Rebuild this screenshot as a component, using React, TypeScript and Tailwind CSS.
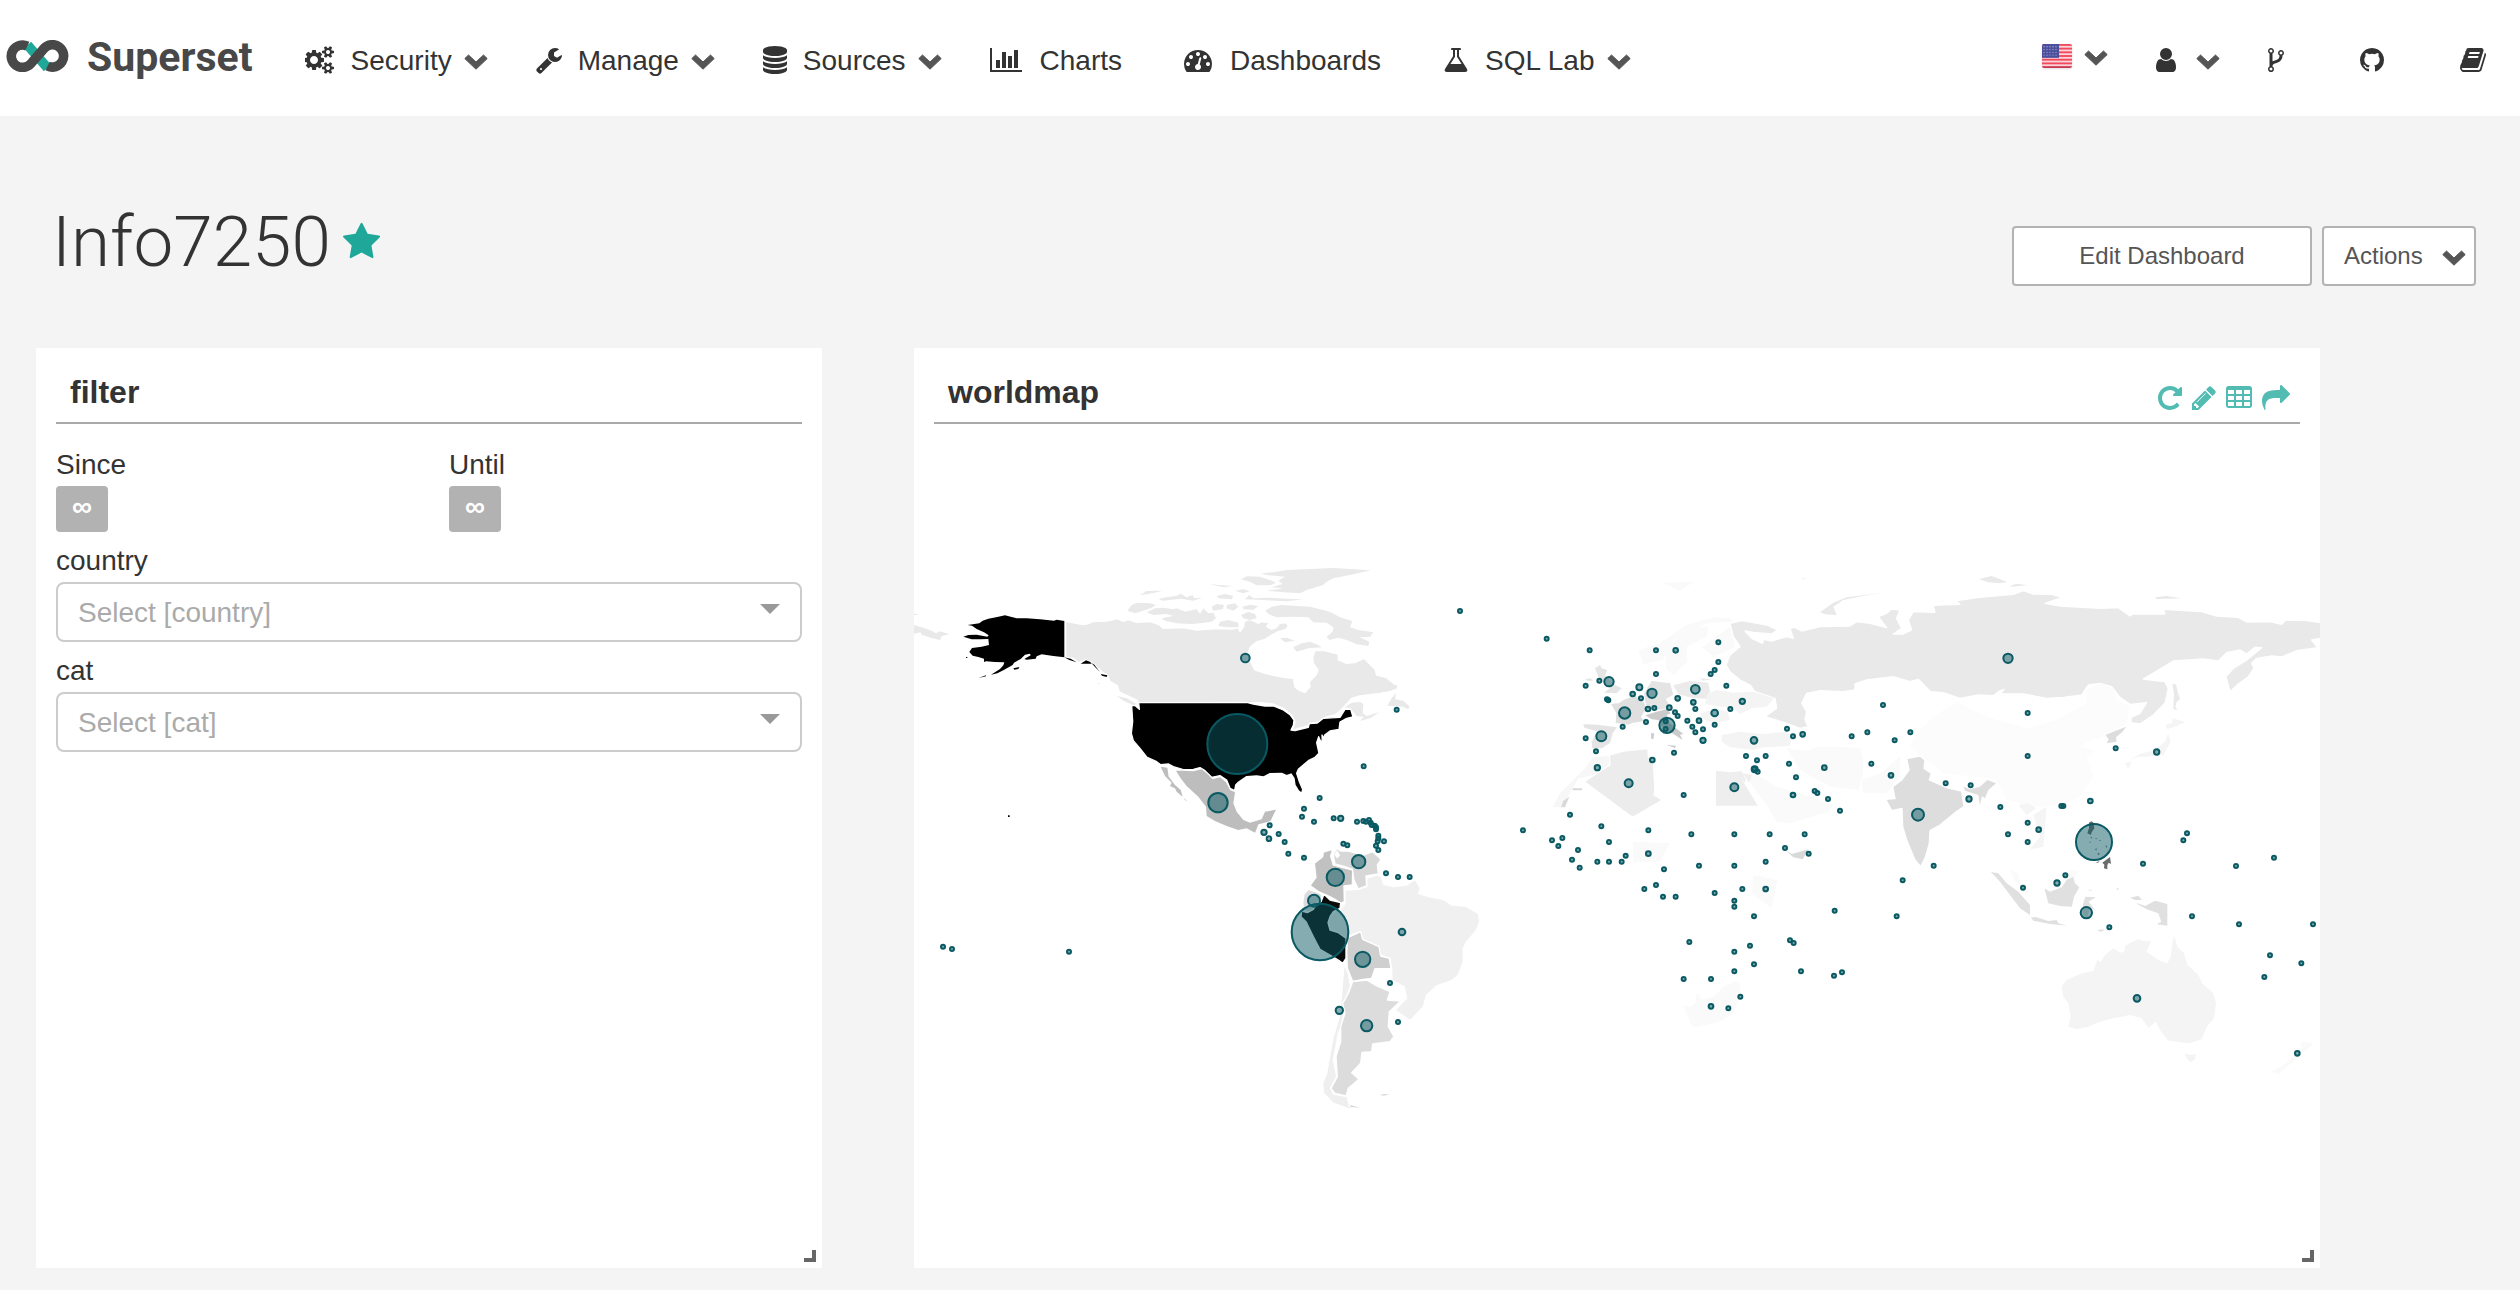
import React from "react";

type Glyph = { d: string; x?: number; adv: number };

const GLYPHS: Record<string, Glyph> = {
  cogs: {
    adv: 1920,
    d: "M832 896q0-106-75-181t-181-75-181 75-75 181 75 181 181 75 181-75 75-181zm768 512q0-52-38-90t-90-38-90 38-38 90q0 53 37.5 90.5t90.5 37.5 90.5-37.5 37.5-90.5zm0-1024q0-52-38-90t-90-38-90 38-38 90q0 53 37.5 90.5t90.5 37.5 90.5-37.5 37.5-90.5zm-384 421v185q0 10-7 19.5t-16 10.5l-155 24q-11 35-32 76 34 48 90 115 7 11 7 20 0 12-7 19-23 30-82.5 89.5t-78.5 59.5q-11 0-21-7l-115-90q-37 19-77 31-11 108-23 155-7 24-30 24h-186q-11 0-20-7.5t-10-17.5l-23-153q-34-10-75-31l-118 89q-7 7-20 7-11 0-21-8-144-133-144-160 0-9 7-19 10-14 41-53t47-61q-23-44-35-82l-152-24q-10-1-17-9.5t-7-19.5v-185q0-10 7-19.5t16-10.5l155-24q11-35 32-76-34-48-90-115-7-11-7-20 0-12 7-20 22-30 82-89t79-59q11 0 21 7l115 90q34-18 77-32 11-108 23-154 7-24 30-24h186q11 0 20 7.5t10 17.5l23 153q34 10 75 31l118-89q8-7 20-7 11 0 21 8 144 133 144 160 0 8-7 19-12 16-42 54t-45 60q23 48 34 82l152 23q10 2 17 10.5t7 19.5zm640 533v140q0 16-149 31-12 27-30 52 51 113 51 138 0 4-4 7-122 71-124 71-8 0-46-47t-52-68q-20 2-30 2t-30-2q-14 21-52 68t-46 47q-2 0-124-71-4-3-4-7 0-25 51-138-18-25-30-52-149-15-149-31v-140q0-16 149-31 13-29 30-52-51-113-51-138 0-4 4-7 4-2 35-20t59-34 30-16q8 0 46 46.5t52 67.5q20-2 30-2t30 2q51-71 92-112l6-2q4 0 124 70 4 3 4 7 0 25-51 138 17 23 30 52 149 15 149 31zm0-1024v140q0 16-149 31-12 27-30 52 51 113 51 138 0 4-4 7-122 71-124 71-8 0-46-47t-52-68q-20 2-30 2t-30-2q-14 21-52 68t-46 47q-2 0-124-71-4-3-4-7 0-25 51-138-18-25-30-52-149-15-149-31v-140q0-16 149-31 13-29 30-52-51-113-51-138 0-4 4-7 4-2 35-20t59-34 30-16q8 0 46 46.5t52 67.5q20-2 30-2t30 2q51-71 92-112l6-2q4 0 124 70 4 3 4 7 0 25-51 138 17 23 30 52 149 15 149 31z",
  },
  wrench: {
    x: 64,
    adv: 1664,
    d: "M448 1472q0-26-19-45t-45-19-45 19-19 45 19 45 45 19 45-19 19-45zm644-420l-682 682q-37 37-90 37-52 0-91-37l-106-108q-38-36-38-90 0-53 38-91l681-681q39 98 114.5 173.5t173.5 114.5zm634-435q0 39-23 106-47 134-164.5 217.5t-258.5 83.5q-185 0-316.5-131.5t-131.5-316.5 131.5-316.5 316.5-131.5q58 0 121.5 16.5t107.5 46.5q16 11 16 28t-16 28l-293 169v224l193 107q5-3 79-48.5t135.5-81 70.5-35.5q15 0 23.5 10t8.5 25z",
  },
  database: {
    x: 128,
    adv: 1536,
    d: "M896 768q237 0 443-43t325-127v170q0 69-103 128t-280 93.5-385 34.5-385-34.5-280-93.5-103-128v-170q119 84 325 127t443 43zm0 768q237 0 443-43t325-127v170q0 69-103 128t-280 93.5-385 34.5-385-34.5-280-93.5-103-128v-170q119 84 325 127t443 43zm0-384q237 0 443-43t325-127v170q0 69-103 128t-280 93.5-385 34.5-385-34.5-280-93.5-103-128v-170q119 84 325 127t443 43zm0-1152q208 0 385 34.5t280 93.5 103 128v128q0 69-103 128t-280 93.5-385 34.5-385-34.5-280-93.5-103-128v-128q0-69 103-128t280-93.5 385-34.5z",
  },
  chart: {
    adv: 2048,
    d: "M640 896v512h-256v-512h256zm384-512v1024h-256v-1024h256zm1024 1152v128h-2048v-1536h128v1408h1920zm-640-896v768h-256v-768h256zm384-384v1152h-256v-1152h256z",
  },
  gauge: {
    adv: 1792,
    d: "M384 1152q0-53-37.5-90.5t-90.5-37.5-90.5 37.5-37.5 90.5 37.5 90.5 90.5 37.5 90.5-37.5 37.5-90.5zm192-448q0-53-37.5-90.5t-90.5-37.5-90.5 37.5-37.5 90.5 37.5 90.5 90.5 37.5 90.5-37.5 37.5-90.5zm428 481l101-382q6-26-7.5-48.5t-38.5-29.5-48 6.5-30 39.5l-101 382q-60 5-107 43.5t-63 98.5q-20 77 20 146t117 89 146-20 89-117q16-60-6-117t-72-91zm660-33q0-53-37.5-90.5t-90.5-37.5-90.5 37.5-37.5 90.5 37.5 90.5 90.5 37.5 90.5-37.5 37.5-90.5zm-640-640q0-53-37.5-90.5t-90.5-37.5-90.5 37.5-37.5 90.5 37.5 90.5 90.5 37.5 90.5-37.5 37.5-90.5zm448 192q0-53-37.5-90.5t-90.5-37.5-90.5 37.5-37.5 90.5 37.5 90.5 90.5 37.5 90.5-37.5 37.5-90.5zm320 448q0 261-141 483-19 29-54 29h-1402q-35 0-54-29-141-221-141-483 0-182 71-348t191-286 286-191 348-71 348 71 286 191 191 286 71 348z",
  },
  flask: {
    x: 64,
    adv: 1664,
    d: "M1591 1448q56 89 21.5 152.5t-140.5 63.5h-1152q-106 0-140.5-63.5t21.5-152.5l503-793v-399h-64q-26 0-45-19t-19-45 19-45 45-19h512q26 0 45 19t19 45-19 45-45 19h-64v399zm-779-725l-272 429h712l-272-429-20-31v-436h-128v436z",
  },
  user: {
    x: 256,
    adv: 1280,
    d: "M1536 1399q0 109-62.5 187t-150.5 78h-854q-88 0-150.5-78t-62.5-187q0-85 8.5-160.5t31.5-152 58.5-131 94-89 134.5-34.5q131 128 313 128t313-128q76 0 134.5 34.5t94 89 58.5 131 31.5 152 8.5 160.5zm-256-887q0 159-112.5 271.5t-271.5 112.5-271.5-112.5-112.5-271.5 112.5-271.5 271.5-112.5 271.5 112.5 112.5 271.5z",
  },
  fork: {
    x: 384,
    adv: 1024,
    d: "M672 1472q0-40-28-68t-68-28-68 28-28 68 28 68 68 28 68-28 28-68zm0-1152q0-40-28-68t-68-28-68 28-28 68 28 68 68 28 68-28 28-68zm640 128q0-40-28-68t-68-28-68 28-28 68 28 68 68 28 68-28 28-68zm96 0q0 52-26 96.5t-70 69.5q-2 287-226 414-67 38-203 81-128 40-169.5 71t-41.5 100v26q44 25 70 69.5t26 96.5q0 80-56 136t-136 56-136-56-56-136q0-52 26-96.5t70-69.5v-820q-44-25-70-69.5t-26-96.5q0-80 56-136t136-56 136 56 56 136q0 52-26 96.5t-70 69.5v497q54-26 154-57 55-17 87.5-29.5t70.5-31 59-39.5 40.5-51 28-69.5 8.5-91.5q-44-25-70-69.5t-26-96.5q0-80 56-136t136-56 136 56 56 136z",
  },
  github: {
    x: 128,
    adv: 1536,
    d: "M896 128q209 0 385.5 103t279.5 279.5 103 385.5q0 251-146.5 451.5t-378.5 277.5q-27 5-40-7t-13-30q0-3 .5-76.5t.5-134.5q0-97-52-142 57-6 102.5-18t94-39 81-66.5 53-105 20.5-150.5q0-119-79-206 37-91-8-204-28-9-81 11t-92 44l-38 24q-93-26-192-26t-192 26q-16-11-42.5-27t-83.5-38.5-85-13.5q-45 113-8 204-79 87-79 206 0 85 20.5 150t52.5 105 80.5 67 94 39 102.5 18q-39 36-49 103-21 10-45 15t-57 5-65.5-21.5-55.5-62.5q-19-32-48.5-52t-49.5-24l-20-3q-21 0-29 4.5t-5 11.5 9 14 13 12l7 5q22 10 43.5 38t31.5 51l10 23q13 38 44 61.5t67 30 69.5 7 55.5-3.5l23-4q0 38 .5 88.5t.5 54.5q0 18-13 30t-40 7q-232-77-378.5-277.5t-146.5-451.5q0-209 103-385.5t279.5-279.5 385.5-103z",
  },
  book: {
    x: 64,
    adv: 1664,
    d: "M1703 478q40 57 18 129l-275 906q-19 64-76.5 107.5t-122.5 43.5h-923q-77 0-148.5-53.5t-99.5-131.5q-24-67-2-127 0-4 3-27t4-37q1-8-3-21.5t-3-19.5q2-11 8-21t16.5-23.5 16.5-23.5q23-38 45-91.5t30-91.5q3-10 .5-30t-.5-28q3-11 17-28t17-23q21-36 42-92t25-90q1-9-2.5-32t.5-28q4-13 22-30.5t22-22.5q19-26 42.5-84.5t27.5-96.5q1-8-3-25.5t-2-26.5q2-8 9-18t18-23 17-21q8-12 16.5-30.5t15-35 16-36 19.5-32 26.5-23.5 36-11.5 47.5 5.5l-1 3q38-9 51-9h761q74 0 114 56t18 130l-274 906q-36 119-71.5 153.5t-128.5 34.5h-869q-27 0-38 15-11 16-1 43 24 70 144 70h923q29 0 56-15.5t35-41.5l300-987q7-22 5-57 38 15 59 43zm-1064 2q-4 13 2 22.5t20 9.5h608q13 0 25.5-9.5t16.5-22.5l21-64q4-13-2-22.5t-20-9.5h-608q-13 0-25.5 9.5t-16.5 22.5zm-83 256q-4 13 2 22.5t20 9.5h608q13 0 25.5-9.5t16.5-22.5l21-64q4-13-2-22.5t-20-9.5h-608q-13 0-25.5 9.5t-16.5 22.5z",
  },
  star: {
    x: 64,
    adv: 1664,
    d: "M1728 647q0 22-26 48l-363 354 86 500q1 7 1 20 0 21-10.5 35.5t-30.5 14.5q-19 0-40-12l-449-236-449 236q-22 12-40 12-21 0-31.5-14.5t-10.5-35.5q0-6 2-20l86-500-364-354q-25-27-25-48 0-37 56-46l502-73 225-455q19-41 49-41t49 41l225 455 502 73q56 9 56 46z",
  },
  repeat: {
    x: 128,
    adv: 1536,
    d: "M1664 256v448q0 26-19 45t-45 19h-448q-42 0-59-40-17-39 14-69l138-138q-148-137-349-137-104 0-198.5 40.5t-163.5 109.5-109.5 163.5-40.5 198.5 40.5 198.5 109.5 163.5 163.5 109.5 198.5 40.5q119 0 225-52t179-147q7-10 23-12 15 0 25 9l137 138q9 8 9.5 20.5t-7.5 22.5q-109 132-264 204.5t-327 72.5q-156 0-298-61t-245-164-164-245-61-298 61-298 164-245 245-164 298-61q147 0 284.5 55.5t244.5 156.5l130-129q29-31 70-14 39 17 39 59z",
  },
  pencil: {
    x: 128,
    adv: 1536,
    d: "M491 1536l91-91-235-235-91 91v107h128v128h107zm523-928q0-22-22-22-10 0-17 7l-542 542q-7 7-7 17 0 22 22 22 10 0 17-7l542-542q7-7 7-17zm-54-192l416 416-832 832h-416v-416zm683 96q0 53-37 90l-166 166-416-416 166-165q36-38 90-38 53 0 91 38l235 234q37 39 37 91z",
  },
  table: {
    x: 64,
    adv: 1664,
    d: "M224 128h1344q66 0 113 47t47 113v1088q0 66-47 113t-113 47h-1344q-66 0-113-47t-47-113v-1088q0-66 47-113t113-47zM192 384v256h384v-256zM704 384v256h384v-256zM1216 384v256h384v-256zM192 768v256h384v-256zM704 768v256h384v-256zM1216 768v256h384v-256zM192 1152v256h384v-256zM704 1152v256h384v-256zM1216 1152v256h384v-256z",
  },
  share: {
    adv: 1792,
    d: "M1792 640q0 26-19 45l-512 512q-19 19-45 19t-45-19-19-45v-256h-224q-98 0-175.5 6t-154 21.5-133 42.5-105.5 69.5-80 101-48.5 138.5-17.5 181q0 55 5 123 0 6 2.5 23.5t2.5 26.5q0 15-8.5 25t-23.5 10q-16 0-28-17-7-9-13-22t-13.5-30-10.5-24q-127-285-127-451 0-199 53-333 162-403 875-403h224v-256q0-26 19-45t45-19 45 19l512 512q19 19 19 45z",
  },
};

function Icon({ name, className = "h-7" }: { name: string; className?: string }) {
  const g = GLYPHS[name];
  return (
    <svg className={`${className} w-auto shrink-0`} viewBox={`${g.x ?? 0} 0 ${g.adv} 1792`} fill="currentColor" fillRule="evenodd" aria-hidden="true">
      <path d={g.d} />
    </svg>
  );
}

function Chevron() {
  return (
    <svg className="h-4 w-6 shrink-0 text-[#555]" viewBox="0 0 24 16" fill="currentColor" stroke="currentColor" strokeWidth="1" strokeLinejoin="round" aria-hidden="true">
      <path d="M4.5 1 12 8 19.5 1 23.2 4.6 12 15.2.8 4.6Z" />
    </svg>
  );
}

function Logo() {
  return (
    <svg className="mb-1 h-8 w-[63px] shrink-0" viewBox="6 38 63 32" fill="none" strokeWidth="9.6" aria-hidden="true">
      <path stroke="#1fa89a" d="M27.5 43 47.5 66" />
      <path stroke="#484848" d="M27.3 44.1A11.2 11.2 0 1 0 31 61.5L44 46.5A11.2 11.2 0 1 1 47.6 64" />
    </svg>
  );
}

function Flag() {
  return (
    <svg className="h-6 w-[30px] shrink-0 rounded-xs shadow-sm" viewBox="0 0 30 26" preserveAspectRatio="none" aria-hidden="true">
      <rect width="30" height="26" fill="#fbd3d8" />
      {[0, 4, 8, 12, 16, 20, 24].map((y) => (
        <rect key={y} y={y} width="30" height="2" fill={y > 20 ? "#c93a52" : "#f04a5c"} />
      ))}
      <rect width="17" height="15" fill="#4b4f9c" />
      {[2, 5, 8, 11].map((y) =>
        [2, 5, 8, 11, 14].map((x) => <circle key={`${x}-${y}`} cx={x} cy={y + 1} r="0.7" fill="#a5a8d4" />)
      )}
    </svg>
  );
}

function NavItem({ icon, label, menu = false }: { icon: string; label: string; menu?: boolean }) {
  return (
    <a href="#" className={`flex items-center ${menu ? "mr-12 gap-4" : "mr-[62px] gap-[18px]"}`}>
      <Icon name={icon} />
      <span className="flex items-center gap-3 pt-0.5">
        {label}
        {menu && <span className="pt-0.5"><Chevron /></span>}
      </span>
    </a>
  );
}

type Shape = { o: string; f: string; d: string; s?: boolean };

// Map artwork is drawn on overlapping tiles at three units per pixel.
const A = "translate(910 540) scale(.33333)";
const B = "translate(1100 740) scale(.33333)";
const C = "translate(1500 560) scale(.33333)";
const D = "translate(1500 800) scale(.33333)";
const E = "translate(1900 560) scale(.33333)";
const F = "translate(1900 800) scale(.33333)";

const SHAPES: Shape[] = [
  { o: A, f: "#e9e9e9", s: true, d: "M467 244 510 252 525 254 550 245 590 243 622 236 640 244 655 239 680 247 720 245 745 253 760 265 820 263 860 270 920 266 965 267 985 263 990 275 1000 262 1003 245 1018 238 1035 245 1045 250 1053 245 1078 248 1070 260 1085 268 1100 262 1108 250 1128 248 1135 258 1128 268 1105 275 1085 285 1065 298 1040 306 1022 320 1015 335 1018 358 1035 390 1080 404 1120 412 1150 415 1155 440 1165 450 1185 458 1200 440 1198 425 1218 405 1224 390 1210 370 1208 352 1215 332 1245 332 1275 340 1285 342 1285 360 1310 370 1335 368 1362 355 1395 388 1400 405 1430 413 1450 430 1464 436 1463 447 1440 455 1410 460 1350 468 1325 475 1305 497 1290 513 1275 525 1245 532 1230 545 1200 550 1195 557 1160 567 1143 572 1150 562 1155 545 1145 525 1120 505 1090 492 1050 488 1012 488 685 487 680 480 650 466 628 456 622 437 600 425 593 407 575 395 560 380 545 368 528 360 505 368 490 355 467 352Z" },
  { o: A, f: "#e9e9e9", d: "M1305 502 1325 488 1350 486 1360 492 1358 520 1370 528 1410 516 1380 535 1350 543 1362 530 1340 528 1330 515 1320 505ZM1432 497 1445 475 1458 459 1455 478 1480 482 1488 490 1498 498 1495 508 1478 500 1450 499ZM620 468 650 475 680 492 670 496 640 482ZM652 212 665 195 680 188 720 190 738 195 725 203 700 212 675 220ZM710 217 735 205 760 203 790 208 800 205 825 215 860 208 870 222 880 205 895 220 910 218 918 235 905 245 870 250 845 252 800 250 765 242 755 235 790 228 770 222 730 225ZM690 165 710 153 757 152 735 158 710 163ZM745 176 770 172 800 167 812 161 830 172 848 165 852 174 877 173 850 182 835 180 815 176 780 180 758 182ZM897 132 935 136 968 138 940 142ZM1053 100 1090 97 1130 90 1200 87 1270 84 1382 91 1330 103 1270 115 1250 125 1240 135 1190 150 1170 160 1120 157 1070 152 1120 145 1085 142 1118 132 1105 122 1125 110 1070 105ZM993 118 1010 109 1050 110 1085 122 1098 128 1080 136 1040 136 1020 125ZM975 152 1000 148 1020 154 1000 160ZM920 168 945 162 970 168 965 178 925 175ZM1005 178 1018 165 1030 175 1080 173 1130 176 1180 178 1130 184 1060 180ZM905 200 920 192 942 195 938 208 910 212ZM950 195 975 190 985 200 970 212 950 205ZM998 200 1020 194 1045 198 1030 209 1000 208ZM993 225 1015 216 1035 222 1040 235 1020 240 1000 235ZM930 245 955 240 985 248 985 262 950 262 925 258ZM1066 212 1085 200 1115 195 1160 198 1200 200 1240 210 1265 218 1290 232 1327 243 1320 262 1345 270 1390 277 1380 290 1350 292 1378 305 1375 318 1340 313 1310 300 1285 293 1258 300 1250 290 1268 275 1270 262 1250 248 1210 247 1195 232 1150 230 1100 232 1075 222ZM1150 322 1175 310 1200 305 1225 315 1235 322 1195 325 1160 335ZM1110 295 1130 293 1155 302 1125 307ZM12 255 40 263 65 272 78 280 90 274 118 283 95 288 90 300 65 294 35 284 32 277 12 281ZM12 222H22V225H12ZM562 428 570 430 568 433Z" },
  { o: A, f: "#000", s: true, d: "M665 497 676 497 688 508 686 488 1010 487 1030 492 1065 498 1090 498 1120 510 1140 524 1152 540 1150 556 1143 570 1155 572 1195 562 1198 551 1222 549 1240 535 1290 532 1305 508 1322 507 1329 531 1310 535 1290 546 1287 568 1260 573 1245 584 1240 594 1236 585 1237 608 1230 600 1226 590 1220 608 1227 640 1215 652 1195 662 1165 688 1160 700 1168 725 1178 748 1175 760 1165 752 1155 735 1152 715 1143 702 1130 707 1115 700 1080 701 1060 711 1040 708 1010 710 985 727 977 735 974 752 960 745 950 720 930 707 905 712 885 692 870 683 850 688 820 689 790 680 776 672 752 674 740 665 710 651 690 625 670 602 664 580 668 545Z" },
  { o: A, f: "#000", d: "M160 290 175 285 200 284 232 290 236 286 222 277 200 267 186 257 173 255 208 250 218 242 235 236 262 231 285 226 305 231 320 235 350 235 390 238 432 242 440 239 463 243 463 352 450 350 430 348 395 343 380 349 377 356 350 359 343 357 362 346 360 341 345 344 332 357 312 368 308 375 280 391 262 400 243 404 270 387 280 376 283 367 255 366 228 364 222 366 222 356 205 351 188 347 178 336 186 324 215 320 237 315 235 297 210 298 185 298ZM205 414 228 406 228 409ZM310 385 328 381 325 387 313 389ZM463 352 482 356 500 367 478 360ZM512 371 528 361 541 366 545 371ZM544 369 553 374 570 396 556 382ZM572 402 592 406 590 411 576 407ZM294 826H299V831H294ZM168 351H172V354H168Z" },
  { o: A, f: "#bdbdbd", d: "M798 692 820 692 850 694 875 688 890 700 908 718 930 712 948 727 960 750 975 757 970 790 980 815 1000 840 1020 848 1055 838 1065 815 1098 809 1090 825 1082 842 1070 847 1045 853 1040 866 1035 878 1010 865 985 870 950 858 915 843 890 828 888 800 865 770 830 738 812 715ZM752 680 772 683 776 710 795 735 812 750 818 770 800 755 795 745 780 738 785 728 765 708ZM820 773 834 785 825 780Z" },
  { o: B, f: "#f0f0f0", s: true, d: "M735 450 775 448 800 440 800 415 830 405 845 410 850 432 880 440 920 435 945 418 962 445 955 460 985 470 1030 478 1055 495 1095 498 1135 520 1139 545 1130 570 1100 605 1090 625 1090 665 1075 705 1055 722 1010 738 980 765 970 800 930 842 885 810 920 775 912 740 875 722 875 690 870 655 840 645 835 620 785 598 780 575 745 590 738 595 715 578 690 570 684 548 690 530 705 513 720 510 735 490Z" },
  { o: B, f: "#c1c1c1", s: true, d: "M643 370 668 350 670 336 698 328 692 348 700 375 730 383 758 390 757 435 732 438 733 485 722 490 705 478 680 465 655 455 630 437 648 412Z" },
  { o: B, f: "#d7d7d7", s: true, d: "M700 345 710 325 722 333 745 333 790 345 818 335 843 358 832 375 835 402 798 408 800 438 775 447 762 420 757 388 735 380 705 372Z" },
  { o: B, f: "#fff", d: "M703 345 712 330 720 346 712 356Z" },
  { o: B, f: "#dcdcdc", s: true, d: "M608 488 612 462 625 448 662 460 667 470 650 492 632 518 612 512Z" },
  { o: B, f: "#0b0b0b", s: true, d: "M672 463 690 480 722 488 720 505 700 515 690 530 684 548 690 570 715 578 738 595 738 625 738 655 728 670 715 660 690 645 660 628 640 590 618 545 603 530 605 513 622 518 640 508 650 492 663 485Z" },
  { o: B, f: "#efefef", s: true, d: "M732 672 745 700 752 740 735 780 728 850 715 880 708 920 700 960 710 1010 692 1045 700 1062 742 1070 748 1098 778 1103 745 1106 700 1090 670 1060 668 1030 680 1000 690 940 700 890 718 830 725 760Z" },
  { o: B, f: "#cfcfcf", s: true, d: "M743 593 782 575 788 598 837 620 842 648 868 655 873 685 825 686 815 715 790 718 758 724 742 685 740 640Z" },
  { o: B, f: "#dcdcdc", s: true, d: "M758 725 800 720 830 738 870 755 862 780 902 783 868 815 865 860 882 890 870 905 818 912 815 935 786 937 782 970 755 998 777 1018 745 1045 738 1068 705 1060 693 1045 712 1010 708 950 722 905 722 860 735 820 728 790 745 760Z" },
  { o: B, f: "#d8d8d8", d: "M840 1065 852 1062 868 1063 852 1067ZM750 1094 780 1104 752 1100Z" },
  { o: C, f: "#fafafa", d: "M415 270 480 250 560 195 640 172 690 175 700 185 620 190 520 240 490 300 430 312ZM497 325 500 270 560 205 625 200 620 230 560 260 562 305 520 345ZM607 262 690 200 705 260 640 290ZM485 68 580 66 540 92ZM735 640 780 650 830 680 900 700 1000 735 985 755 920 775 870 790 830 785 800 735 765 690ZM860 565 920 572 960 560 1000 560 1080 565 1090 600 1090 640 1075 690 990 680 900 630ZM400 845 510 850 480 905 400 905ZM1085 660 1140 640 1200 590 1200 650 1160 700 1090 700Z" },
  { o: C, f: "#e9e9e9", s: true, d: "M690 190 725 182 760 188 800 195 832 210 815 222 760 217 735 213 755 235 788 250 790 238 815 243 860 230 880 235 870 205 885 202 905 213 960 200 1050 198 1070 185 1110 190 1160 203 1135 170 1160 160 1175 147 1200 150 1190 175 1205 205 1180 222 1210 222 1235 210 1225 180 1240 155 1305 157 1300 136 1380 133 1370 122 1440 112 1540 103 1570 92 1600 102 1655 103 1687 112 1635 130 1680 138 1800 145 1855 143 1890 168 1900 162 1995 162 1990 148 2105 155 2150 168 2215 172 2240 186 2310 185 2345 193 2358 180 2420 182 2463 188 2463 235 2435 240 2453 263 2390 272 2345 291 2315 288 2270 295 2255 310 2262 325 2245 350 2215 372 2190 395 2178 350 2200 325 2240 300 2285 263 2265 262 2240 282 2220 270 2180 278 2155 303 2110 297 2020 303 1930 357 1965 362 1995 365 2005 385 1995 430 1960 465 1920 492 1893 488 1893 472 1920 460 1940 428 1890 433 1860 412 1835 380 1800 370 1765 375 1745 405 1690 412 1640 415 1570 402 1500 402 1512 388 1495 395 1480 407 1435 405 1380 415 1330 398 1292 395 1255 358 1230 365 1180 350 1100 360 1065 372 1065 390 1030 395 960 392 920 400 905 430 920 455 915 480 925 500 900 505 860 490 795 470 830 445 825 415 765 395 750 375 720 360 690 335 678 315 690 285 720 260 700 230Z" },
  { o: C, f: "#e9e9e9", d: "M960 157 1000 128 1040 112 1150 98 1090 108 1030 120 1000 140 1010 165 975 163ZM1437 57 1475 48 1522 66 1500 70 1465 67ZM1532 77 1550 71 1582 76 1535 80ZM1965 112 2000 108 2045 115 1970 117ZM2017 373 2028 373 2033 395 2040 418 2030 425 2026 440 2032 450 2020 447 2022 400ZM905 54 918 55 908 57ZM597 355 635 358 610 362Z" },
  { o: C, f: "#e5e5e5", d: "M285 325 300 315 305 325 322 330 315 345 345 375 365 385 350 400 312 398 330 385 310 365 295 350ZM255 358 272 355 280 362 262 362Z" },
  { o: C, f: "#dfdfdf", s: true, d: "M330 430 355 428 370 418 405 405 428 420 442 435 435 455 425 470 435 485 400 490 385 496 345 490 347 460Z" },
  { o: C, f: "#e4e4e4", s: true, d: "M430 402 442 380 455 360 480 364 512 368 522 405 500 418 510 435 495 450 460 452 442 447 435 430ZM246 490 290 492 354 500 340 520 332 550 305 567 275 567 273 545 288 515 252 505Z" },
  { o: C, f: "#cbcbcb", d: "M436 466 470 455 500 448 512 460 500 465 508 488 528 505 550 522 540 524 548 540 525 525 485 500 475 480 455 478ZM500 555 528 557 525 564ZM453 520 462 520 461 536 454 537Z" },
  { o: C, f: "#ebebeb", d: "M520 376 570 363 625 368 630 395 620 416 580 415 535 403Z" },
  { o: C, f: "#f4f4f4", d: "M622 402 650 390 700 398 760 395 822 415 800 440 755 445 720 462 700 440 660 440 615 432ZM602 460 650 445 682 455 690 480 640 490 605 475ZM665 525 720 515 790 522 860 515 875 535 870 558 790 562 760 570 690 562 665 545Z" },
  { o: C, f: "#f7f7f7", d: "M326 588 330 612 280 645 235 655 185 742 158 742 180 700 215 665 255 625 280 592Z" },
  { o: C, f: "#ececec", s: true, d: "M328 585 370 573 444 566 445 590 460 610 465 690 462 705 487 720 400 771 392 768 253 665 275 650 330 615Z" },
  { o: C, f: "#eeeeee", d: "M648 632 690 637 725 634 738 660 733 668 720 650 748 695 773 737 648 737ZM728 640 755 645 748 668Z" },
  { o: C, f: "#d9d9d9", d: "M183 742 190 722 208 710 195 742ZM218 685H246V691H218ZM856 870 875 882 925 868 908 898 880 892Z" },
  { o: D, f: "#fafafa", d: "M550 615 568 622 585 612 590 578 605 598 640 590 670 562 705 542 718 550 722 590 700 640 660 665 580 683 568 660ZM760 225 832 240 815 325 755 280Z" },
  { o: D, f: "#fff", d: "M668 625 682 615 692 625 680 635Z" },
  { o: E, f: "#fcfcfc", d: "M50 520 100 470 170 425 260 470 380 505 470 480 560 430 560 390 600 370 640 385 650 420 690 440 680 490 610 530 560 545 540 560 590 570 560 590 580 650 540 710 480 735 400 740 320 720 290 660 230 650 130 640 80 600 30 560Z" },
  { o: E, f: "#dddddd", s: true, d: "M20 596 60 588 75 600 72 625 94 640 88 660 140 683 185 693 192 740 165 758 120 795 90 812 88 850 75 895 62 920 45 900 20 840 8 800 6 745 -25 752 -43 718 -15 716 -22 680 5 660 27 630Z" },
  { o: E, f: "#dddddd", d: "M190 680 210 688 240 680 262 660 288 670 265 690 255 715 246 708 240 735 235 705 195 692ZM617 525 640 515 678 500 668 515 648 532 650 545 620 550 626 538Z" },
  { o: E, f: "#f5f5f5", d: "M820 475 855 487 825 500 800 508 797 495 815 490ZM805 520 812 545 790 585 765 588 740 590 715 590 690 600 720 582 760 572 795 545ZM675 610 695 605 685 628ZM355 735 385 730 408 745 380 765ZM400 765 440 740 430 860 390 868 420 830Z" },
  { o: F, f: "#6c6c6c", d: "M567 68 574 64 581 68 583 85 575 97 573 105 562 100 567 85ZM572 110 577 112 573 116ZM587 113 592 117 587 118ZM597 119 603 121 600 124ZM585 148 590 145 589 152ZM594 158 600 161 593 166ZM617 134 622 141 618 143ZM568 124 573 127 570 129ZM607 188 618 180 630 171 633 192 626 188 622 196 622 208 612 205 613 194ZM587 188 600 182 594 188Z" },
  { o: F, f: "#fafafa", d: "M330 210 355 220 362 255 345 245ZM480 255 510 210 540 212 520 232 500 240Z" },
  { o: F, f: "#e0e0e0", d: "M273 216 295 220 320 250 355 275 368 290 390 315 390 345 360 325 330 285 300 245ZM393 352 410 352 445 363 470 360 475 370 500 377 450 372 400 362ZM433 265 450 275 485 262 500 240 520 230 525 250 538 262 522 290 515 320 480 318 445 310ZM549 312 556 290 587 292 566 305 585 330 570 322 562 352 550 345ZM708 310 720 312 735 318 765 302 802 312 802 377 770 373 784 365 775 340 740 328ZM690 293 715 287 726 300 705 300ZM650 263 656 265 652 272ZM565 269 580 270 568 272ZM590 390 615 388 604 396Z" },
  { o: F, f: "#f4f4f4", d: "M485 560 500 540 540 522 580 512 592 480 603 485 615 465 640 445 660 458 672 456 676 438 690 428 715 418 730 424 753 424 740 455 775 480 802 490 812 470 818 425 823 408 832 440 852 460 862 495 895 525 908 552 940 580 948 610 942 655 920 680 905 718 870 730 835 726 805 722 780 690 768 665 745 683 725 655 690 645 640 655 600 665 565 680 530 687 505 680 512 650 505 610 490 590ZM853 760 870 765 888 763 885 778 872 787 862 778Z" },
  { o: F, f: "#fafafa", d: "M1112 815 1150 795 1185 765 1195 775 1160 800 1135 822ZM1205 725 1240 730 1215 755 1200 755Z" },
];

const BUBBLES: { o: string; dots: number[][] }[] = [
  { o: A, dots: [[1006, 354, 13], [982, 612, 90], [924, 788, 29], [1460, 509], [1361, 679], [1229, 774], [1182, 806], [1176, 830], [1212, 845], [1271, 835], [1292, 835, 8], [1341, 845], [1079, 856], [1062, 877, 8], [1077, 896, 7], [1106, 882], [1124, 906], [1135, 941], [1182, 953], [1360, 843], [1368, 845], [1377, 840], [1382, 848], [1385, 855], [1394, 857], [1398, 862], [1398, 868], [1405, 887], [1405, 895], [1403, 904], [1422, 904], [1398, 917], [1405, 930], [1300, 911], [1312, 916], [1346, 965, 20], [99, 1220], [126, 1227], [477, 1235], [1650, 213]] },
  { o: B, dots: [[706, 412, 26], [642, 482, 18], [660, 576, 85], [906, 576, 10], [788, 658, 23], [870, 729], [718, 811, 11], [894, 846], [800, 857, 17], [858, 400], [894, 411], [929, 411]] },
  { o: C, dots: [[140, 236], [269, 271], [468, 271], [527, 271, 7], [655, 247], [655, 306], [644, 330], [632, 342], [468, 342], [257, 377], [298, 362], [327, 365, 14], [321, 418], [325, 421], [418, 382, 9], [398, 402, 7], [423, 415], [456, 400, 14], [586, 388, 13], [533, 415, 7], [679, 377], [727, 424, 8], [691, 447], [644, 459, 10], [644, 494], [374, 459, 17], [444, 447, 7], [463, 444], [508, 443, 7], [525, 457], [533, 468], [438, 486], [368, 500], [257, 535], [304, 529, 15], [288, 574], [292, 623, 8], [501, 496, 23], [497, 484], [497, 507], [562, 482], [580, 427, 7], [586, 447], [597, 482, 7], [577, 500], [609, 508], [586, 517], [609, 541, 8], [522, 578], [457, 600, 7], [386, 670, 12], [551, 705], [703, 682, 12], [762, 541, 10], [738, 588], [797, 588], [771, 601], [764, 628, 9], [763, 626], [773, 635], [861, 506], [879, 529], [908, 523, 7], [867, 611], [888, 652], [879, 705, 7], [944, 693], [952, 699], [984, 717], [1020, 752], [973, 623, 7], [1055, 529], [1102, 517], [1149, 435], [1184, 541], [1231, 517], [1114, 611], [1173, 646, 7]] },
  { o: D, dots: [[210, 44], [69, 91], [304, 79], [156, 121], [187, 114], [175, 138], [234, 150], [327, 126], [216, 179], [239, 203], [292, 185], [327, 185], [365, 185], [377, 167], [445, 91], [445, 161, 7], [574, 103], [703, 103], [809, 103], [914, 103], [855, 144], [926, 161], [797, 185], [797, 267, 7], [492, 208], [597, 197], [703, 197], [433, 267], [468, 255], [489, 290], [527, 290], [644, 279], [727, 267], [703, 302], [703, 320], [762, 349], [1004, 332], [1190, 349], [1208, 241], [568, 426], [703, 455], [750, 437], [762, 493], [703, 514], [633, 537], [551, 537], [870, 421], [881, 429], [903, 514], [1002, 527], [1026, 517], [633, 619, 7], [685, 625], [721, 590], [1254, 44, 18]] },
  { o: E, dots: [[324, 295, 14], [383, 459], [383, 588], [647, 565], [770, 576, 8], [137, 670], [212, 676], [207, 717, 8], [301, 741], [484, 738], [490, 738], [571, 723, 7]] },
  { o: F, dots: [[383, 68], [416, 89, 7], [324, 103], [383, 126], [101, 197], [369, 263], [496, 226], [471, 249, 8], [559, 338, 17], [628, 382], [582, 126, 54], [729, 191], [861, 100], [850, 121], [1008, 198], [1122, 173], [876, 349], [1017, 373], [1239, 373], [1110, 466], [1204, 490], [1093, 531], [711, 595, 10], [1192, 760, 7]] },
];

function WorldMap() {
  return (
    <svg className="block w-full" viewBox="914 424 1406 800" role="img" aria-label="World map">
      {SHAPES.map((s, i) => (
        <path key={i} transform={s.o} d={s.d} fill={s.f} stroke={s.s ? "#fff" : "none"} strokeWidth="4" strokeLinejoin="round" />
      ))}
      {BUBBLES.map((b, i) => (
        <g key={i} transform={b.o} fill="#0a5a64" fillOpacity="0.5" stroke="#0a5a64">
          {b.dots.map(([x, y, r = 6], j) => (
            <circle key={j} cx={x} cy={y} r={r} strokeWidth={6} />
          ))}
        </g>
      ))}
    </svg>
  );
}

function Panel({ title, tools, children }: { title: string; tools?: React.ReactNode; children: React.ReactNode }) {
  return (
    <section className="relative h-[920px] overflow-hidden bg-white">
      <header className="mx-5 flex items-start justify-between border-b-2 border-[#a9a9a9] pt-6 pr-2.5 pb-2.5 pl-3.5">
        <h2 className="text-[32px] leading-10 font-bold">{title}</h2>
        {tools}
      </header>
      {children}
      <span className="absolute right-1.5 bottom-1.5 h-3 w-3 border-r-4 border-b-4 border-[#666]" />
    </section>
  );
}

function Since({ label }: { label: string }) {
  return (
    <div>
      <div id={label} className="leading-[42px]">{label}</div>
      <button aria-labelledby={label} className="flex h-[46px] w-[52px] items-center justify-center rounded bg-[#b2b2b2] pb-1 text-[28px] font-bold text-white">
        ∞
      </button>
    </div>
  );
}

function FilterSelect({ name }: { name: string }) {
  return (
    <div className="mt-2">
      <label htmlFor={name} className="block leading-[42px]">{name}</label>
      <div className="relative">
        <select id={name} className="block h-[60px] w-full appearance-none rounded-lg border-2 border-[#ccc] bg-white px-5 pt-0.5 text-[#aaa]">
          <option>{`Select [${name}]`}</option>
        </select>
        <svg className="pointer-events-none absolute top-[22px] right-[22px] h-2.5 w-5" viewBox="0 0 20 10" fill="#999" aria-hidden="true">
          <path d="M0 0H20L10 10Z" />
        </svg>
      </div>
    </div>
  );
}

export default function App() {
  return (
    <div className="min-h-screen bg-[#f4f4f4] pb-[22px] font-['Liberation_Sans',Arial,sans-serif] text-[28px] text-[#333]">
      <nav className="flex h-[116px] items-center bg-white pt-1 pr-[34px] pl-1.5">
        <a href="#" className="mr-[52px] flex items-center gap-[18px] pb-1 font-['Roboto',sans-serif] text-[41px] font-bold text-[#484848]">
          <Logo />
          Superset
        </a>
        <NavItem icon="cogs" label="Security" menu />
        <NavItem icon="wrench" label="Manage" menu />
        <NavItem icon="database" label="Sources" menu />
        <NavItem icon="chart" label="Charts" />
        <NavItem icon="gauge" label="Dashboards" />
        <NavItem icon="flask" label="SQL Lab" menu />
        <div className="ml-auto flex items-center">
          <a href="#" aria-label="Language" className="mr-12 flex items-center gap-3 pb-2">
            <Flag />
            <span className="pt-1"><Chevron /></span>
          </a>
          <a href="#" aria-label="User" className="mr-12 flex items-center gap-5">
            <Icon name="user" />
            <span className="pt-1"><Chevron /></span>
          </a>
          <a href="#" aria-label="Version" className="mr-[76px]"><Icon name="fork" /></a>
          <a href="#" aria-label="GitHub" className="mr-[76px]"><Icon name="github" /></a>
          <a href="#" aria-label="Documentation"><Icon name="book" /></a>
        </div>
      </nav>

      <div className="flex h-[232px] items-start justify-between pr-11 pl-[52px]">
        <div className="flex items-center gap-3 pt-[78px]">
          <h1 className="font-['Roboto',sans-serif] text-[71px] leading-[96px] font-light">Info7250</h1>
          <button aria-label="Favorite" className="text-[#1fa89a]"><Icon name="star" className="h-10" /></button>
        </div>
        <div className="flex gap-2.5 pt-[110px] text-2xl text-[#555]">
          <button className="h-[60px] w-[300px] rounded border-2 border-[#b3b3b3] bg-white">Edit Dashboard</button>
          <button className="flex h-[60px] w-[154px] items-center justify-between rounded border-2 border-[#b3b3b3] bg-white pr-2 pl-5">
            Actions
            <span className="pt-1"><Chevron /></span>
          </button>
        </div>
      </div>

      <main className="grid grid-cols-[786fr_1406fr] gap-[92px] pr-[200px] pl-9">
        <Panel title="filter">
          <div className="px-5 pt-5">
            <div className="grid grid-cols-2 gap-10">
              <Since label="Since" />
              <Since label="Until" />
            </div>
            <FilterSelect name="country" />
            <FilterSelect name="cat" />
          </div>
        </Panel>
        <Panel
          title="worldmap"
          tools={
            <div className="flex gap-2.5 pt-3 text-[#52bbb2]">
              <button aria-label="Refresh"><Icon name="repeat" /></button>
              <button aria-label="Edit chart"><Icon name="pencil" /></button>
              <button aria-label="Export data"><Icon name="table" /></button>
              <button aria-label="Explore"><Icon name="share" /></button>
            </div>
          }
        >
          <WorldMap />
        </Panel>
      </main>
    </div>
  );
}
